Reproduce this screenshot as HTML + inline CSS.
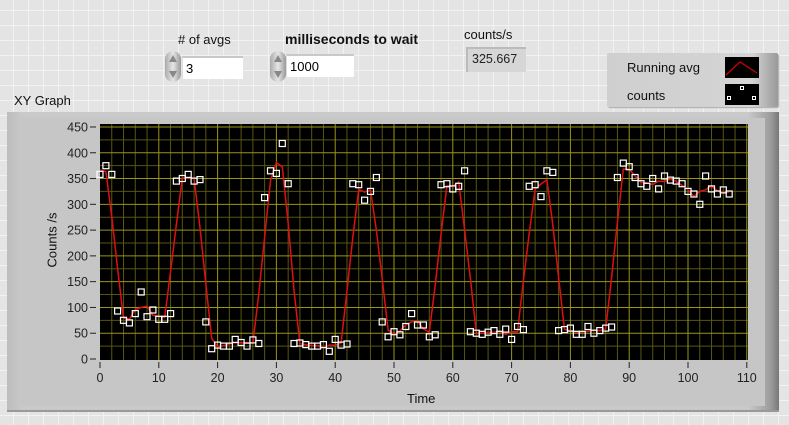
<!DOCTYPE html>
<html><head><meta charset="utf-8"><style>
*{margin:0;padding:0;box-sizing:border-box}
body{width:789px;height:425px;overflow:hidden;position:relative;font-family:"Liberation Sans",sans-serif;
background-color:#e4e4e4;
background-image:linear-gradient(#f2f2f2 1px,transparent 1px),linear-gradient(90deg,#f2f2f2 1px,transparent 1px);
background-size:15px 15px;background-position:13px 10px;}
.abs{position:absolute}
.lbl{font-size:13px;color:#111}
.spin{position:absolute;width:16px;height:31px;border-radius:8px;background:linear-gradient(90deg,#aaa,#e6e6e6 50%,#999);}
.spin:before{content:"";position:absolute;left:4px;top:4px;border-left:4px solid transparent;border-right:4px solid transparent;border-bottom:7px solid #888}
.spin:after{content:"";position:absolute;left:4px;bottom:4px;border-left:4px solid transparent;border-right:4px solid transparent;border-top:7px solid #888}
.field{position:absolute;background:#fff;border-top:2px solid #c8c8c8;border-left:1px solid #ddd;font-size:13px;padding:3px 0 0 3px;height:23px}
</style></head><body>
<div class="abs lbl" style="left:178px;top:32px">#&nbsp;of avgs</div>
<div class="spin" style="left:165px;top:51px"></div>
<div class="field" style="left:182px;top:56px;width:61px">3</div>
<div class="abs lbl" style="left:285px;top:31px;font-weight:bold;font-size:14px">milliseconds to wait</div>
<div class="spin" style="left:270px;top:51px"></div>
<div class="field" style="left:286px;top:54px;width:68px">1000</div>
<div class="abs lbl" style="left:464px;top:27px">counts/s</div>
<div class="abs" style="left:466px;top:47px;width:60px;height:25px;background:#d6d6d6;border-top:2px solid #bbb;border-left:2px solid #bbb;font-size:12.5px;padding:3px 0 0 4px;color:#222">325.667</div>
<div class="abs" style="left:607px;top:53px;width:171px;height:54px;background:linear-gradient(90deg,#cfcfcf,#d4d4d4 85%,#999);border-radius:2px;box-shadow:1px 1px 1px #aaa"></div>
<div class="abs lbl" style="left:627px;top:60px">Running avg</div>
<div class="abs lbl" style="left:627px;top:88px">counts</div>
<svg class="abs" style="left:725px;top:57px" width="34" height="21"><rect width="34" height="21" fill="#000"/><polyline points="1,18 15,5 32,16" fill="none" stroke="#c00" stroke-width="1.3"/></svg>
<svg class="abs" style="left:725px;top:84px" width="34" height="21"><rect width="34" height="21" fill="#000"/><g fill="none" stroke="#fff" stroke-width="1"><rect x="15.5" y="2.5" width="3" height="3"/><rect x="2.5" y="12.5" width="3" height="3"/><rect x="27.5" y="12.5" width="3" height="3"/></g></svg>
<div class="abs lbl" style="left:14px;top:93px">XY Graph</div>
<div class="abs" style="left:7px;top:112px;width:772px;height:300px;background:linear-gradient(90deg,#bdbdbd,#c9c9c9 2%,#c9c9c9 96%,#9a9a9a 99%,#777);border-bottom:2px solid #999;"></div>
<div class="abs" style="left:20px;top:118px;width:745px;height:288px;background:#c6c6c6"></div>
<svg id="g" class="abs" style="left:0;top:0" width="789" height="425" font-family="Liberation Sans, sans-serif"></svg>
<div class="abs" style="top:240px;transform:translate(-50%,-50%) rotate(-90deg);font-size:13px;color:#111;white-space:nowrap;left:52px">Counts /s</div>
<div class="abs lbl" style="left:407px;top:391px">Time</div>
<script>
var d=[358,375,358,93,75,70,88,130,82,95,77,77,88,345,350,358,345,348,72,20,27,25,25,38,32,25,37,30,313,365,360,418,340,30,31,28,25,25,28,15,38,27,29,340,338,308,325,352,72,43,53,47,63,88,66,66,43,47,338,340,330,335,365,53,50,48,52,55,48,58,38,63,57,335,338,315,365,362,55,57,60,48,48,63,50,55,60,62,352,380,373,352,340,335,350,330,355,347,345,340,325,320,300,355,330,320,328,320];
var X=function(t){return 100+t*5.88},Y=function(v){return 359-v*0.5156};
var s='<rect x="100" y="124" width="648" height="236" fill="#000"/>';
for(var t=2;t<110;t+=2){if(t%10)s+='<line x1="'+X(t)+'" y1="124" x2="'+X(t)+'" y2="360" stroke="#58560e" stroke-width="1"/>';}
for(var v=25;v<450;v+=50)s+='<line x1="100" y1="'+Y(v)+'" x2="748" y2="'+Y(v)+'" stroke="#58560e"/>';
for(var t=10;t<=110;t+=10)s+='<line x1="'+X(t)+'" y1="124" x2="'+X(t)+'" y2="360" stroke="#9a9418"/>';
for(var v=50;v<=450;v+=50)s+='<line x1="100" y1="'+Y(v)+'" x2="748" y2="'+Y(v)+'" stroke="#9a9418"/>';
var p=[];for(var i=0;i<d.length;i++){var a=d.slice(Math.max(0,i-1),i+2);var m=a.reduce(function(x,y){return x+y},0)/a.length;p.push(X(i).toFixed(1)+','+Y(m).toFixed(1));}
s+='<polyline points="'+p.join(' ')+'" fill="none" stroke="#e01010" stroke-width="1.5"/>';
for(var i=0;i<d.length;i++)s+='<rect x="'+(X(i)-3).toFixed(1)+'" y="'+(Y(d[i])-3).toFixed(1)+'" width="6" height="6" fill="none" stroke="#fff" stroke-width="1.2"/>';
for(var v=0;v<=450;v+=50){s+='<text x="88" y="'+(Y(v)+4.5)+'" text-anchor="end" font-size="12.5" fill="#222">'+v+'</text><line x1="90" y1="'+Y(v)+'" x2="96" y2="'+Y(v)+'" stroke="#222"/>';}
for(var t=0;t<=110;t+=10){s+='<line x1="'+X(t)+'" y1="362" x2="'+X(t)+'" y2="368" stroke="#222"/><text x="'+X(t)+'" y="382" text-anchor="middle" font-size="12.5" fill="#222">'+t+'</text>';}
document.getElementById('g').innerHTML=s;
</script>
</body></html>
